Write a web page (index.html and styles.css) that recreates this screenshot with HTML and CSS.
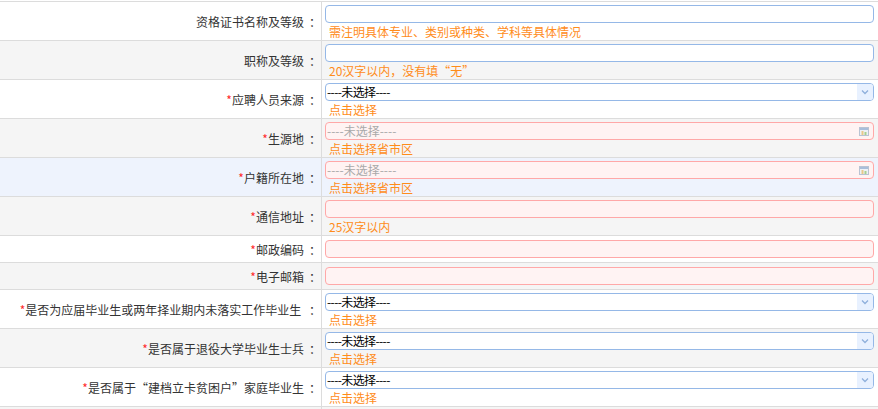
FILE: index.html
```html
<!DOCTYPE html>
<html lang="zh-CN">
<head>
<meta charset="utf-8">
<title>form</title>
<link rel="stylesheet" href="styles.css">
</head>
<body>
<table class="form">
  <tr class="row">
    <td class="label">资格证书名称及等级<span class="colon">：</span></td>
    <td class="field"><div class="box"></div><div class="hint">需注明具体专业、类别或种类、学科等具体情况</div></td>
  </tr>
  <tr class="row alt">
    <td class="label">职称及等级<span class="colon">：</span></td>
    <td class="field"><div class="box"></div><div class="hint">20汉字以内，没有填“无”</div></td>
  </tr>
  <tr class="row">
    <td class="label"><span class="req">*</span>应聘人员来源<span class="colon">：</span></td>
    <td class="field"><div class="box combo"><span class="val">----未选择----</span><span class="arrow"><svg width="8" height="6" viewBox="0 0 8 6"><path d="M1 1.5 L4 4.5 L7 1.5" fill="none" stroke="#8fb0dc" stroke-width="1.3"/></svg></span></div><div class="hint">点击选择</div></td>
  </tr>
  <tr class="row alt">
    <td class="label"><span class="req">*</span>生源地<span class="colon">：</span></td>
    <td class="field"><div class="box invalid combo"><span class="val ph">----未选择----</span><span class="picker"><svg width="10" height="9" viewBox="0 0 10 9"><rect x="0.5" y="0.5" width="9" height="8" fill="#eef1f6" stroke="#b9c3d3"/><rect x="1" y="1" width="8" height="2" fill="#a9bedb"/><rect x="2.5" y="4" width="2" height="4" fill="#e9c98a"/><rect x="5.5" y="5" width="2" height="3" fill="#a8d08f"/></svg></span></div><div class="hint">点击选择省市区</div></td>
  </tr>
  <tr class="row hover">
    <td class="label"><span class="req">*</span>户籍所在地<span class="colon">：</span></td>
    <td class="field"><div class="box invalid combo"><span class="val ph">----未选择----</span><span class="picker"><svg width="10" height="9" viewBox="0 0 10 9"><rect x="0.5" y="0.5" width="9" height="8" fill="#eef1f6" stroke="#b9c3d3"/><rect x="1" y="1" width="8" height="2" fill="#a9bedb"/><rect x="2.5" y="4" width="2" height="4" fill="#e9c98a"/><rect x="5.5" y="5" width="2" height="3" fill="#a8d08f"/></svg></span></div><div class="hint">点击选择省市区</div></td>
  </tr>
  <tr class="row alt">
    <td class="label"><span class="req">*</span>通信地址<span class="colon">：</span></td>
    <td class="field"><div class="box invalid"></div><div class="hint">25汉字以内</div></td>
  </tr>
  <tr class="row short">
    <td class="label"><span class="req">*</span>邮政编码<span class="colon">：</span></td>
    <td class="field"><div class="box invalid"></div></td>
  </tr>
  <tr class="row short alt">
    <td class="label"><span class="req">*</span>电子邮箱<span class="colon">：</span></td>
    <td class="field"><div class="box invalid"></div></td>
  </tr>
  <tr class="row">
    <td class="label"><span class="req">*</span>是否为应届毕业生或两年择业期内未落实工作毕业生 <span class="colon">：</span></td>
    <td class="field"><div class="box combo"><span class="val">----未选择----</span><span class="arrow"><svg width="8" height="6" viewBox="0 0 8 6"><path d="M1 1.5 L4 4.5 L7 1.5" fill="none" stroke="#8fb0dc" stroke-width="1.3"/></svg></span></div><div class="hint">点击选择</div></td>
  </tr>
  <tr class="row alt">
    <td class="label"><span class="req">*</span>是否属于退役大学毕业生士兵<span class="colon">：</span></td>
    <td class="field"><div class="box combo"><span class="val">----未选择----</span><span class="arrow"><svg width="8" height="6" viewBox="0 0 8 6"><path d="M1 1.5 L4 4.5 L7 1.5" fill="none" stroke="#8fb0dc" stroke-width="1.3"/></svg></span></div><div class="hint">点击选择</div></td>
  </tr>
  <tr class="row">
    <td class="label"><span class="req">*</span>是否属于“建档立卡贫困户”家庭毕业生<span class="colon">：</span></td>
    <td class="field"><div class="box combo"><span class="val">----未选择----</span><span class="arrow"><svg width="8" height="6" viewBox="0 0 8 6"><path d="M1 1.5 L4 4.5 L7 1.5" fill="none" stroke="#8fb0dc" stroke-width="1.3"/></svg></span></div><div class="hint">点击选择</div></td>
  </tr>
  <tr class="row alt">
    <td class="label">&nbsp;</td>
    <td class="field"><div class="box"></div><div class="hint">&nbsp;</div></td>
  </tr>
</table>
</body>
</html>
```

FILE: styles.css
```css
html, body {
  margin: 0;
  padding: 0;
  background: #ffffff;
}
body {
  font-family: "Noto Sans CJK SC", "Microsoft YaHei", sans-serif;
  font-size: 12px;
  color: #333333;
  overflow: hidden;
}
.form {
  width: 100%;
  border-collapse: collapse;
  margin-top: 1px;
}
.form td {
  border-top: 1px solid #dcdcdc;
  border-bottom: 1px solid #dcdcdc;
  padding: 0;
}
.row {
  height: 38px;
}
.row.alt {
  background: #f5f5f5;
}
.row.hover {
  background: #eef3fd;
}
.label {
  width: 321px;
  text-align: right;
  vertical-align: middle;
  padding: 2px 0 0 0 !important;
  border-right: 1px solid #dcdcdc;
  line-height: 16px;
  white-space: nowrap;
}
.colon {
  padding-left: 5px;
}
.req {
  color: #ff2a2a;
}
.field {
  vertical-align: top;
  padding: 3px 4px 0 3px !important;
}
.row.short .field {
  padding: 4px 4px 4px 3px !important;
  vertical-align: middle;
}
.row.short {
  height: 26px;
}
.box {
  box-sizing: border-box;
  height: 18px;
  border: 1px solid #95b8e7;
  border-radius: 4px;
  background: #ffffff;
  display: flex;
  align-items: center;
  overflow: hidden;
}
.box.invalid {
  border-color: #ffa8a8;
  background: #fff3f3;
}
.val {
  flex: 1;
  padding-left: 1px;
  color: #000000;
  font-size: 12px;
  line-height: 16px;
  letter-spacing: -0.6px;
  white-space: nowrap;
}
.val.ph {
  color: #a9a9a9;
  letter-spacing: 0;
}
.arrow {
  width: 16px;
  height: 100%;
  background: #e8f1ff;
  display: flex;
  align-items: center;
  justify-content: center;
}
.picker {
  width: 18px;
  height: 100%;
  display: flex;
  align-items: center;
  justify-content: center;
}
.hint {
  color: #ff8c1a;
  font-size: 12px;
  line-height: 17px;
  padding-left: 4px;
  white-space: nowrap;
}
```
